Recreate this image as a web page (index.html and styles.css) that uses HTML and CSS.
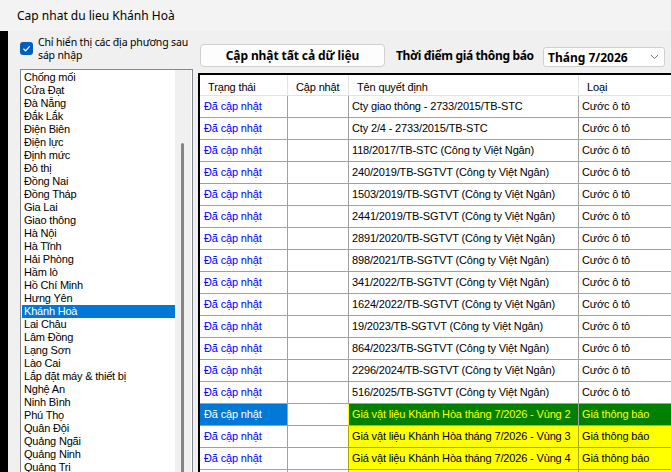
FILE: index.html
```html
<!doctype html>
<html lang="vi">
<head>
  <meta charset="utf-8">
  <title>Cap nhat du lieu Khánh Hoà</title>
  <link rel="stylesheet" href="styles.css">
</head>
<body>

  <div class="titlebar">Cap nhat du lieu Khánh Hoà</div>

  <div class="main">
    <div class="edge"></div>

    <!-- left panel: filter + list of provinces -->
    <div class="side">
      <label class="check-row">
        <span class="checkbox">
          <svg width="13" height="13" viewBox="0 0 13 13"><path d="M3.5 6.8 L5.6 8.8 L9.6 4.4" fill="none" stroke="#fff" stroke-width="1.2"/></svg>
        </span>
        <span class="check-text">Chỉ hiển thị các địa phương sau<br>sáp nhập</span>
      </label>

      <div class="listbox">
        <ul class="items">
          <li>Chống mối</li>
          <li>Cửa Đạt</li>
          <li>Đà Nẵng</li>
          <li>Đắk Lắk</li>
          <li>Điện Biên</li>
          <li>Điện lực</li>
          <li>Định mức</li>
          <li>Đô thị</li>
          <li>Đồng Nai</li>
          <li>Đồng Tháp</li>
          <li>Gia Lai</li>
          <li>Giao thông</li>
          <li>Hà Nội</li>
          <li>Hà Tĩnh</li>
          <li>Hải Phòng</li>
          <li>Hầm lò</li>
          <li>Hồ Chí Minh</li>
          <li>Hưng Yên</li>
          <li class="selected">Khánh Hoà</li>
          <li>Lai Châu</li>
          <li>Lâm Đồng</li>
          <li>Lạng Sơn</li>
          <li>Lào Cai</li>
          <li>Lắp đặt máy &amp; thiết bị</li>
          <li>Nghệ An</li>
          <li>Ninh Bình</li>
          <li>Phú Thọ</li>
          <li>Quân Đội</li>
          <li>Quảng Ngãi</li>
          <li>Quảng Ninh</li>
          <li>Quảng Trị</li>
        </ul>
        <div class="vscroll"><div class="thumb"></div></div>
      </div>
    </div>

    <!-- right panel: toolbar + grid -->
    <div class="content">
      <div class="toolbar">
        <button type="button" class="btn">Cập nhật tất cả dữ liệu</button>
        <span class="toolbar-label">Thời điểm giá thông báo</span>
        <div class="combo">
          <span>Tháng 7/2026</span>
          <svg width="9" height="6" viewBox="0 0 9 6"><path d="M1 1 L4.5 4.5 L8 1" fill="none" stroke="#707070" stroke-width="1"/></svg>
        </div>
      </div>

      <div class="grid">
        <div class="row head">
          <div class="c1">Trạng thái</div>
          <div class="c2">Cập nhật</div>
          <div class="c3">Tên quyết định</div>
          <div class="c4">Loại</div>
        </div>

        <div class="row"><div class="c1 st">Đã cập nhật</div><div class="c2"></div><div class="c3">Cty giao thông - 2733/2015/TB-STC</div><div class="c4">Cước ô tô</div></div>
        <div class="row"><div class="c1 st">Đã cập nhật</div><div class="c2"></div><div class="c3">Cty 2/4 - 2733/2015/TB-STC</div><div class="c4">Cước ô tô</div></div>
        <div class="row"><div class="c1 st">Đã cập nhật</div><div class="c2"></div><div class="c3">118/2017/TB-STC (Công ty Việt Ngân)</div><div class="c4">Cước ô tô</div></div>
        <div class="row"><div class="c1 st">Đã cập nhật</div><div class="c2"></div><div class="c3">240/2019/TB-SGTVT (Công ty Việt Ngân)</div><div class="c4">Cước ô tô</div></div>
        <div class="row"><div class="c1 st">Đã cập nhật</div><div class="c2"></div><div class="c3">1503/2019/TB-SGTVT (Công ty Việt Ngân)</div><div class="c4">Cước ô tô</div></div>
        <div class="row"><div class="c1 st">Đã cập nhật</div><div class="c2"></div><div class="c3">2441/2019/TB-SGTVT (Công ty Việt Ngân)</div><div class="c4">Cước ô tô</div></div>
        <div class="row"><div class="c1 st">Đã cập nhật</div><div class="c2"></div><div class="c3">2891/2020/TB-SGTVT (Công ty Việt Ngân)</div><div class="c4">Cước ô tô</div></div>
        <div class="row"><div class="c1 st">Đã cập nhật</div><div class="c2"></div><div class="c3">898/2021/TB-SGTVT (Công ty Việt Ngân)</div><div class="c4">Cước ô tô</div></div>
        <div class="row"><div class="c1 st">Đã cập nhật</div><div class="c2"></div><div class="c3">341/2022/TB-SGTVT (Công ty Việt Ngân)</div><div class="c4">Cước ô tô</div></div>
        <div class="row"><div class="c1 st">Đã cập nhật</div><div class="c2"></div><div class="c3">1624/2022/TB-SGTVT (Công ty Việt Ngân)</div><div class="c4">Cước ô tô</div></div>
        <div class="row"><div class="c1 st">Đã cập nhật</div><div class="c2"></div><div class="c3">19/2023/TB-SGTVT (Công ty Việt Ngân)</div><div class="c4">Cước ô tô</div></div>
        <div class="row"><div class="c1 st">Đã cập nhật</div><div class="c2"></div><div class="c3">864/2023/TB-SGTVT (Công ty Việt Ngân)</div><div class="c4">Cước ô tô</div></div>
        <div class="row"><div class="c1 st">Đã cập nhật</div><div class="c2"></div><div class="c3">2296/2024/TB-SGTVT (Công ty Việt Ngân)</div><div class="c4">Cước ô tô</div></div>
        <div class="row"><div class="c1 st">Đã cập nhật</div><div class="c2"></div><div class="c3">516/2025/TB-SGTVT (Công ty Việt Ngân)</div><div class="c4">Cước ô tô</div></div>

        <div class="row green"><div class="c1 st cur">Đã cập nhật</div><div class="c2"></div><div class="c3">Giá vật liệu Khánh Hòa tháng 7/2026 - Vùng 2</div><div class="c4">Giá thông báo</div></div>
        <div class="row yellow"><div class="c1 st">Đã cập nhật</div><div class="c2"></div><div class="c3">Giá vật liệu Khánh Hòa tháng 7/2026 - Vùng 3</div><div class="c4">Giá thông báo</div></div>
        <div class="row yellow"><div class="c1 st">Đã cập nhật</div><div class="c2"></div><div class="c3">Giá vật liệu Khánh Hòa tháng 7/2026 - Vùng 4</div><div class="c4">Giá thông báo</div></div>
        <div class="row yellow"><div class="c1 st"></div><div class="c2"></div><div class="c3"></div><div class="c4"></div></div>
      </div>
    </div>
  </div>

</body>
</html>
```

FILE: styles.css
```css
* {
  box-sizing: border-box;
}

body {
  margin: 0;
  width: 671px;
  height: 472px;
  overflow: hidden;
  background: #f0f0f0;
  font-family: "Noto Sans", "Liberation Sans", sans-serif;
  font-size: 12px;
  color: #000;
}

.titlebar {
  height: 31px;
  line-height: 31px;
  padding-left: 17px;
  background: #f3f3f3;
}

.main {
  display: flex;
  height: 441px;
}

.edge {
  width: 8px;
  background: #000;
}

/* left panel */
.side {
  width: 185px;
  padding: 11px 0 0 12px;
  overflow: hidden;
}

.check-row {
  display: flex;
  align-items: flex-start;
  gap: 5px;
}

.checkbox {
  width: 13px;
  height: 13px;
  border-radius: 3px;
  background: #005fb8;
  flex: none;
}

.checkbox svg {
  display: block;
}

.check-text {
  font-size: 10.5px;
  line-height: 13px;
  margin-top: -6px;
  letter-spacing: -0.15px;
  white-space: nowrap;
}

.listbox {
  margin-top: 7px;
  width: 173px;
  height: 420px;
  border: 1px solid #828790;
  background: #fff;
  display: flex;
}

.items {
  list-style: none;
  margin: 0;
  padding: 1px 0 0 1px;
  width: 154px;
  font-family: "Liberation Sans", Arial, sans-serif;
  font-size: 11px;
  letter-spacing: -0.2px;
}

.items li {
  height: 13px;
  line-height: 13px;
  padding-left: 2px;
  white-space: nowrap;
}

.items li.selected {
  background: #0078d7;
  color: #fff;
}

.vscroll {
  width: 16px;
  background: #f0f0f0;
}

.thumb {
  margin: 73px 0 0 6px;
  width: 3px;
  height: 400px;
  border-radius: 2px;
  background: #858585;
}

/* right panel */
.content {
  flex: 1;
  padding-left: 5px;
  display: flex;
  flex-direction: column;
  min-width: 0;
}

.toolbar {
  display: flex;
  align-items: center;
  height: 23px;
  margin: 13px 0 6px 2px;
}

.btn {
  width: 185px;
  height: 23px;
  padding: 0;
  background: #fdfdfd;
  border: 1px solid #d0d0d0;
  border-radius: 4px;
  font-family: inherit;
  font-size: 12px;
  font-weight: bold;
  letter-spacing: -0.1px;
  color: #000;
}

.toolbar-label {
  margin-left: 11px;
  font-weight: bold;
  letter-spacing: -0.35px;
}

.combo {
  margin-left: auto;
  margin-right: 6px;
  align-self: flex-end;
  width: 122px;
  height: 20px;
  padding: 0 5px 0 4px;
  background: #fff;
  border: 1px solid #d0d0d0;
  border-radius: 3px;
  display: flex;
  align-items: center;
  justify-content: space-between;
  font-weight: bold;
}

/* data grid */
.grid {
  flex: 1;
  border-top: 2px solid #000;
  border-left: 2px solid #000;
  background: #fff;
  overflow: hidden;
  font-family: "Liberation Sans", Arial, sans-serif;
  font-size: 11px;
  letter-spacing: -0.15px;
}

.row {
  display: flex;
  height: 22px;
}

.row > div {
  flex: none;
  height: 22px;
  line-height: 21px;
  padding-left: 3px;
  border-right: 1px solid #a0a0a0;
  border-bottom: 1px solid #a0a0a0;
  white-space: nowrap;
  overflow: hidden;
}

.c1 { width: 88px; }
.c2 { width: 61px; }
.c3 { width: 230px; }
.c4 { width: 110px; }

.row.head {
  height: 21px;
}

.row.head > div {
  height: 21px;
  line-height: 20px;
  padding: 2px 0 0 8px;
  border-color: #e3e3e3;
}

.row > .st {
  padding-left: 4px;
  color: #0000ff;
}

.row > .st.cur {
  background: #0078d7;
  color: #fff;
}

.row.green .c3,
.row.green .c4 {
  background: #008000;
  color: #ffff00;
}

.row.green .c2 {
  border-right-color: #ffff00;
}

.row.yellow .c3,
.row.yellow .c4 {
  background: #ffff00;
  border-color: #a8a800;
}

.row.yellow .c2 {
  border-right-color: #a8a800;
}
```
